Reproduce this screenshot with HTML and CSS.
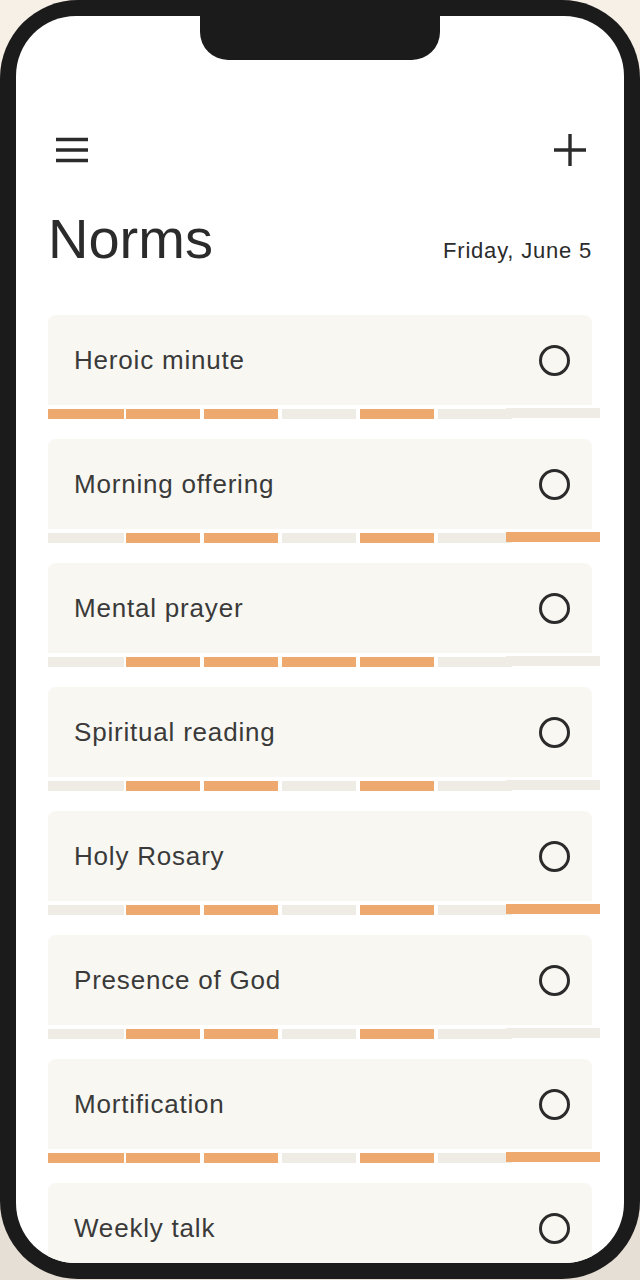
FILE: index.html
```html
<!DOCTYPE html>
<html>

<head>
    <title>Norms</title>
    <link rel="stylesheet" href="styles.css">
</head>

<body>
    <div class="phone">
        <div class="screen">
            <div class="notch"></div>
            <div class="content">
                <div class="topbar">
                    <svg class="icon" width="32" height="32" viewBox="0 0 32 32">
                        <path d="M0 5.5H32M0 16H32M0 26.5H32" stroke="#2b2b2b" stroke-width="3.4" fill="none" />
                    </svg>
                    <svg class="icon" width="32" height="32" viewBox="0 0 32 32">
                        <path d="M16 0V32M0 16H32" stroke="#2b2b2b" stroke-width="3.4" fill="none" />
                    </svg>
                </div>

                <div class="title-row">
                    <h1>Norms</h1>
                    <span class="date">Friday, June 5</span>
                </div>

                <div class="list">
                    <div class="norm">
                        <div class="card"><span>Heroic minute</span><span class="check"></span></div>
                        <div class="bars">
                            <i class="on"></i><i class="on"></i><i class="on"></i><i></i><i class="on"></i><i></i><i class="last"></i>
                        </div>
                    </div>
                    <div class="norm">
                        <div class="card"><span>Morning offering</span><span class="check"></span></div>
                        <div class="bars">
                            <i></i><i class="on"></i><i class="on"></i><i></i><i class="on"></i><i></i><i class="last on"></i>
                        </div>
                    </div>
                    <div class="norm">
                        <div class="card"><span>Mental prayer</span><span class="check"></span></div>
                        <div class="bars">
                            <i></i><i class="on"></i><i class="on"></i><i class="on"></i><i class="on"></i><i></i><i class="last"></i>
                        </div>
                    </div>
                    <div class="norm">
                        <div class="card"><span>Spiritual reading</span><span class="check"></span></div>
                        <div class="bars">
                            <i></i><i class="on"></i><i class="on"></i><i></i><i class="on"></i><i></i><i class="last"></i>
                        </div>
                    </div>
                    <div class="norm">
                        <div class="card"><span>Holy Rosary</span><span class="check"></span></div>
                        <div class="bars">
                            <i></i><i class="on"></i><i class="on"></i><i></i><i class="on"></i><i></i><i class="last on"></i>
                        </div>
                    </div>
                    <div class="norm">
                        <div class="card"><span>Presence of God</span><span class="check"></span></div>
                        <div class="bars">
                            <i></i><i class="on"></i><i class="on"></i><i></i><i class="on"></i><i></i><i class="last"></i>
                        </div>
                    </div>
                    <div class="norm">
                        <div class="card"><span>Mortification</span><span class="check"></span></div>
                        <div class="bars">
                            <i class="on"></i><i class="on"></i><i class="on"></i><i></i><i class="on"></i><i></i><i class="last on"></i>
                        </div>
                    </div>
                    <div class="norm">
                        <div class="card"><span>Weekly talk</span><span class="check"></span></div>
                        <div class="bars">
                            <i></i><i class="on"></i><i class="on"></i><i></i><i class="on"></i><i></i><i class="last"></i>
                        </div>
                    </div>
                </div>
            </div>
        </div>
    </div>
</body>

</html>
```

FILE: styles.css
```css
body {
    margin: 0;
    font-family: "Liberation Sans", Arial, sans-serif;
    background: linear-gradient(#f7f0e7, #e6dfd5);
    height: 1280px;
}

.phone {
    width: 640px;
    height: 1279px;
    box-sizing: border-box;
    padding: 16px;
    background-color: #1b1b1b;
    border-radius: 78px;
}

.screen {
    height: 100%;
    background-color: white;
    border-radius: 60px;
    overflow: hidden;
    position: relative;
}

.notch {
    position: absolute;
    top: 0;
    left: 184px;
    width: 240px;
    height: 44px;
    background-color: #1b1b1b;
    border-radius: 0 0 28px 28px;
}

.content {
    padding: 118px 32px 0 32px;
    color: #2b2b2b;
}

.topbar {
    display: flex;
    justify-content: space-between;
    padding: 0 6px 0 8px;
}

.icon {
    display: block;
}

.title-row {
    display: flex;
    justify-content: space-between;
    align-items: baseline;
    margin-top: 41px;
}

h1 {
    margin: 0;
    font-size: 56px;
    font-weight: normal;
    line-height: 64px;
    color: #2b2b2b;
}

.date {
    font-size: 22px;
    letter-spacing: 0.8px;
    color: #2b2b2b;
}

.list {
    margin-top: 44px;
}

.norm {
    margin-bottom: 20px;
}

.card {
    height: 90px;
    background-color: #f8f7f2;
    border-radius: 8px 8px 0 0;
    display: flex;
    align-items: center;
    justify-content: space-between;
    padding: 0 22px 0 26px;
    font-size: 26px;
    letter-spacing: 0.8px;
    color: #3a3a3a;
}

.check {
    width: 25px;
    height: 25px;
    border: 3.5px solid #2b2b2b;
    border-radius: 50%;
}

.bars {
    display: flex;
    align-items: flex-end;
    height: 11px;
    margin-top: 3px;
}

.bars i {
    display: block;
    flex-shrink: 0;
    width: 74px;
    height: 10px;
    margin-left: 4px;
    background-color: #efece5;
}

.bars i:first-child {
    width: 76px;
    margin-left: 0;
    margin-right: -2px;
}

.bars i.on {
    background-color: #eda96e;
}

.bars i.last {
    width: 94px;
    margin-left: -6px;
    align-self: flex-start;
}
```
